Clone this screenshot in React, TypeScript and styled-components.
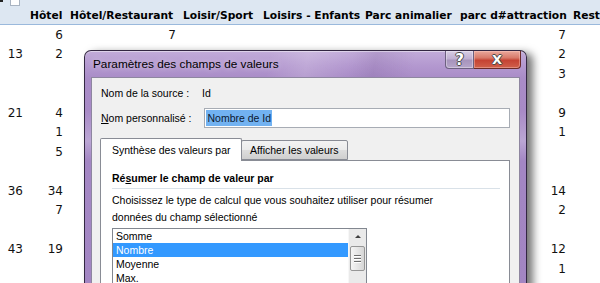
import styled, { createGlobalStyle } from 'styled-components';

const GlobalStyle = createGlobalStyle`
  html, body {
    margin: 0;
    padding: 0;
    background: #fff;
    overflow: hidden;
  }
`;

const COLUMNS = '26px 40px 113px 80px 102px 95px 113px 1fr';

const headers = [
  '',
  'Hôtel',
  'Hôtel/Restaurant',
  'Loisir/Sport',
  'Loisirs - Enfants',
  'Parc animalier',
  'parc d#attraction',
  'Restaurant',
];

// only the columns that show numbers in the picture
const row = (first = '', hotel = '', hotelResto = '', parc = '') => [
  first,
  hotel,
  hotelResto,
  '',
  '',
  '',
  parc,
  '',
];

const rows = [
  row('', '6', '7', '7'),
  row('13', '2', '', '2'),
  row('', '', '', '3'),
  row(),
  row('21', '4', '', '9'),
  row('', '1', '', '1'),
  row('', '5'),
  row(),
  row('36', '34', '', '14'),
  row('', '7', '', '2'),
  row(),
  row('43', '19', '', '12'),
  row('', '', '', '1'),
];

const functions = ['Somme', 'Nombre', 'Moyenne', 'Max.', 'Min.'];

const App = () => {
  return (
    <>
      <GlobalStyle />
      <Sheet>
        <HeaderRow>
          <FilterBox />
          {headers.map((h, i) => (
            <HeaderCell key={i}>{h}</HeaderCell>
          ))}
        </HeaderRow>
        {rows.map((cells, r) => (
          <DataRow key={r}>
            {cells.map((c, i) => (
              <NumCell key={i}>{c}</NumCell>
            ))}
          </DataRow>
        ))}

        <Dialog>
          <TitleBar>
            <Title>Paramètres des champs de valeurs</Title>
            <CaptionButtons>
              <HelpButton>?</HelpButton>
              <CloseButton>X</CloseButton>
            </CaptionButtons>
          </TitleBar>
          <Client>
            <SourceRow>
              <SourceLabel>Nom de la source :</SourceLabel>
              <span>Id</span>
            </SourceRow>
            <NameRow>
              <NameLabel>
                <u>N</u>om personnalisé :
              </NameLabel>
              <NameInput>
                <Selected>Nombre de Id</Selected>
              </NameInput>
            </NameRow>
            <TabStrip>
              <Tab active>Synthèse des valeurs par</Tab>
              <Tab>Afficher les valeurs</Tab>
            </TabStrip>
            <Panel>
              <SectionTitle>
                Ré<u>s</u>umer le champ de valeur par
              </SectionTitle>
              <Separator />
              <Description>
                Choisissez le type de calcul que vous souhaitez utiliser pour résumer
                <br />
                données du champ sélectionné
              </Description>
              <ListBox>
                <ListItems>
                  {functions.map((f) => (
                    <ListItem key={f} selected={f === 'Nombre'}>
                      {f}
                    </ListItem>
                  ))}
                </ListItems>
                <ScrollTrack>
                  <ArrowUp />
                  <Thumb>
                    <Grip />
                    <Grip />
                    <Grip />
                  </Thumb>
                </ScrollTrack>
              </ListBox>
            </Panel>
          </Client>
        </Dialog>
      </Sheet>
    </>
  );
};

const Sheet = styled.div`
  position: relative;
  width: 600px;
  height: 283px;
  overflow: hidden;
  background: #fff;
  font-family: 'DejaVu Sans', Verdana, sans-serif;
  color: #111;
`;

const HeaderRow = styled.div`
  position: relative;
  display: grid;
  grid-template-columns: ${COLUMNS};
  align-items: end;
  height: 25px;
  padding-bottom: 1px;
  box-sizing: border-box;
  background: #dde7f2;
  border-bottom: 1px solid #9ab9dc;
`;

const FilterBox = styled.div`
  position: absolute;
  left: 10px;
  top: -3px;
  width: 8px;
  height: 7px;
  background: #fff;
  border: 1px solid #a9b4c2;
  &::before {
    content: '';
    position: absolute;
    left: -11px;
    top: 2px;
    width: 3px;
    height: 2px;
    background: #222;
  }
`;

const HeaderCell = styled.div`
  padding-left: 4px;
  font-weight: bold;
  font-size: 10.7px;
  line-height: 14px;
  white-space: nowrap;
  color: #000;
`;

const DataRow = styled.div`
  display: grid;
  grid-template-columns: ${COLUMNS};
  align-items: center;
  height: 19.5px;
`;

const NumCell = styled.div`
  padding-right: 3px;
  text-align: right;
  font-size: 12px;
  line-height: 14px;
`;

const Dialog = styled.div`
  position: absolute;
  left: 84px;
  top: 50px;
  width: 443px;
  height: 260px;
  box-sizing: border-box;
  display: flex;
  flex-direction: column;
  padding: 0 6px;
  border: 1px solid rgba(38, 28, 52, 0.9);
  border-bottom: none;
  border-radius: 7px 7px 0 0;
  background:
    linear-gradient(100deg, transparent 38%, rgba(255, 255, 255, 0.16) 46%, transparent 55%,
      rgba(90, 60, 120, 0.14) 60%, transparent 68%),
    linear-gradient(180deg, #c2acd9 0px, #b499d0 14px, #a98cc7 27px, #a88ac6 60px,
      #bba6d4 90px, #a386c3 110px, #a285c2 100%);
  box-shadow: 6px 3px 9px rgba(0, 0, 0, 0.55), inset 0 1px 0 rgba(255, 255, 255, 0.45);
  font-family: 'Liberation Sans', Arial, sans-serif;
  color: #000;
`;

const TitleBar = styled.div`
  display: flex;
  justify-content: space-between;
  align-items: flex-start;
  height: 26px;
`;

const Title = styled.div`
  padding-left: 2px;
  font-size: 11.8px;
  line-height: 27px;
  color: #000;
  text-shadow: 0 0 6px rgba(255, 255, 255, 0.6);
`;

const CaptionButtons = styled.div`
  display: flex;
  margin-right: -1px;
`;

const CaptionButton = styled.div`
  height: 18px;
  display: flex;
  align-items: center;
  justify-content: center;
  font-family: 'DejaVu Sans', sans-serif;
  font-weight: bold;
  color: #fff;
  text-shadow: -1px 0 #4a4a4a, 1px 0 #4a4a4a, 0 -1px #4a4a4a, 0 1px #4a4a4a;
  box-sizing: border-box;
`;

const HelpButton = styled(CaptionButton)`
  width: 29px;
  font-size: 15px;
  border: 1px solid #6d6080;
  border-top: none;
  border-radius: 0 0 0 4px;
  background: linear-gradient(180deg, #d8cde4 0%, #c0b0d2 45%, #a794bc 55%, #b6a6c9 100%);
  box-shadow: inset 0 0 0 1px rgba(255, 255, 255, 0.35);
`;

const CloseButton = styled(CaptionButton)`
  width: 47px;
  font-size: 13px;
  border: 1px solid #6b2a28;
  border-left: none;
  border-top: none;
  border-radius: 0 0 4px 0;
  background: linear-gradient(180deg, #eaa89c 0%, #d87a6a 40%, #c54333 55%, #d0604b 100%);
  box-shadow: inset 0 0 0 1px rgba(255, 210, 200, 0.4);
`;

const Client = styled.div`
  flex: 1;
  padding: 0 9px;
  background: #f0f0f0;
  border: 1px solid #8e86a0;
  border-bottom: none;
  font-size: 10.5px;
`;

const SourceRow = styled.div`
  display: flex;
  padding-top: 7px;
  line-height: 16px;
`;

const SourceLabel = styled.span`
  width: 101px;
`;

const NameRow = styled.div`
  display: flex;
  align-items: center;
  margin-top: 7px;
  height: 20px;
`;

const NameLabel = styled.span`
  width: 104px;
`;

const NameInput = styled.div`
  width: 307px;
  height: 20px;
  box-sizing: border-box;
  display: flex;
  align-items: center;
  padding-left: 1px;
  background: #fff;
  border: 1px solid #a7acb4;
`;

const Selected = styled.span`
  padding: 0 1px;
  line-height: 16px;
  background: #72b2f1;
  color: #0c1830;
`;

const TabStrip = styled.div`
  display: flex;
  align-items: flex-end;
  margin-top: 10px;
  margin-left: -1px;
  position: relative;
  z-index: 1;
`;

const Tab = styled.div<{ active?: boolean }>`
  box-sizing: border-box;
  width: ${(p) => (p.active ? '142px' : '107px')};
  height: ${(p) => (p.active ? '23px' : '20px')};
  margin-bottom: ${(p) => (p.active ? '-1px' : '0')};
  margin-left: ${(p) => (p.active ? '0' : '-1px')};
  padding-left: ${(p) => (p.active ? '11px' : '8px')};
  line-height: ${(p) => (p.active ? '22px' : '19px')};
  border: 1px solid #898c95;
  border-bottom: ${(p) => (p.active ? 'none' : '1px solid #898c95')};
  background: ${(p) => (p.active ? '#fff' : 'linear-gradient(180deg, #f3f3f3 0%, #ebebeb 50%, #dddddd 51%, #cfcfcf 100%)')};
  border-radius: 2px 2px 0 0;
  white-space: nowrap;
`;

const Panel = styled.div`
  width: 410px;
  height: 140px;
  box-sizing: border-box;
  margin-left: -1px;
  padding: 10px 9px 0 11px;
  background: #fff;
  border: 1px solid #898c95;
  border-bottom: none;
`;

const SectionTitle = styled.div`
  font-weight: bold;
  line-height: 14px;
`;

const Separator = styled.div`
  margin-top: 3px;
  height: 1px;
  background: #d9e1e8;
`;

const Description = styled.div`
  margin-top: 3px;
  line-height: 17px;
`;

const ListBox = styled.div`
  display: flex;
  width: 255px;
  height: 80px;
  margin-top: 2px;
  box-sizing: border-box;
  border: 1px solid #828790;
  background: #fff;
`;

const ListItems = styled.div`
  flex: 1;
`;

const ListItem = styled.div<{ selected?: boolean }>`
  height: 14px;
  line-height: 14px;
  padding-left: 3px;
  background: ${(p) => (p.selected ? '#3399ff' : 'transparent')};
  color: ${(p) => (p.selected ? '#fff' : '#000')};
`;

const ScrollTrack = styled.div`
  width: 17px;
  display: flex;
  flex-direction: column;
  align-items: center;
  background: #eaeaea;
  border-left: 1px solid #f7f7f7;
`;

const ArrowUp = styled.div`
  margin-top: 6px;
  width: 0;
  height: 0;
  border-left: 3px solid transparent;
  border-right: 3px solid transparent;
  border-bottom: 3px solid #404040;
`;

const Thumb = styled.div`
  margin-top: 8px;
  width: 15px;
  height: 25px;
  box-sizing: border-box;
  display: flex;
  flex-direction: column;
  justify-content: center;
  align-items: center;
  gap: 2px;
  border: 1px solid #969696;
  border-radius: 2px;
  background: linear-gradient(90deg, #f5f5f5 0%, #e6e6e6 50%, #d6d6d6 100%);
`;

const Grip = styled.div`
  width: 7px;
  height: 1px;
  background: #6e6e6e;
  box-shadow: 0 1px 0 #fff;
`;

export default App;
